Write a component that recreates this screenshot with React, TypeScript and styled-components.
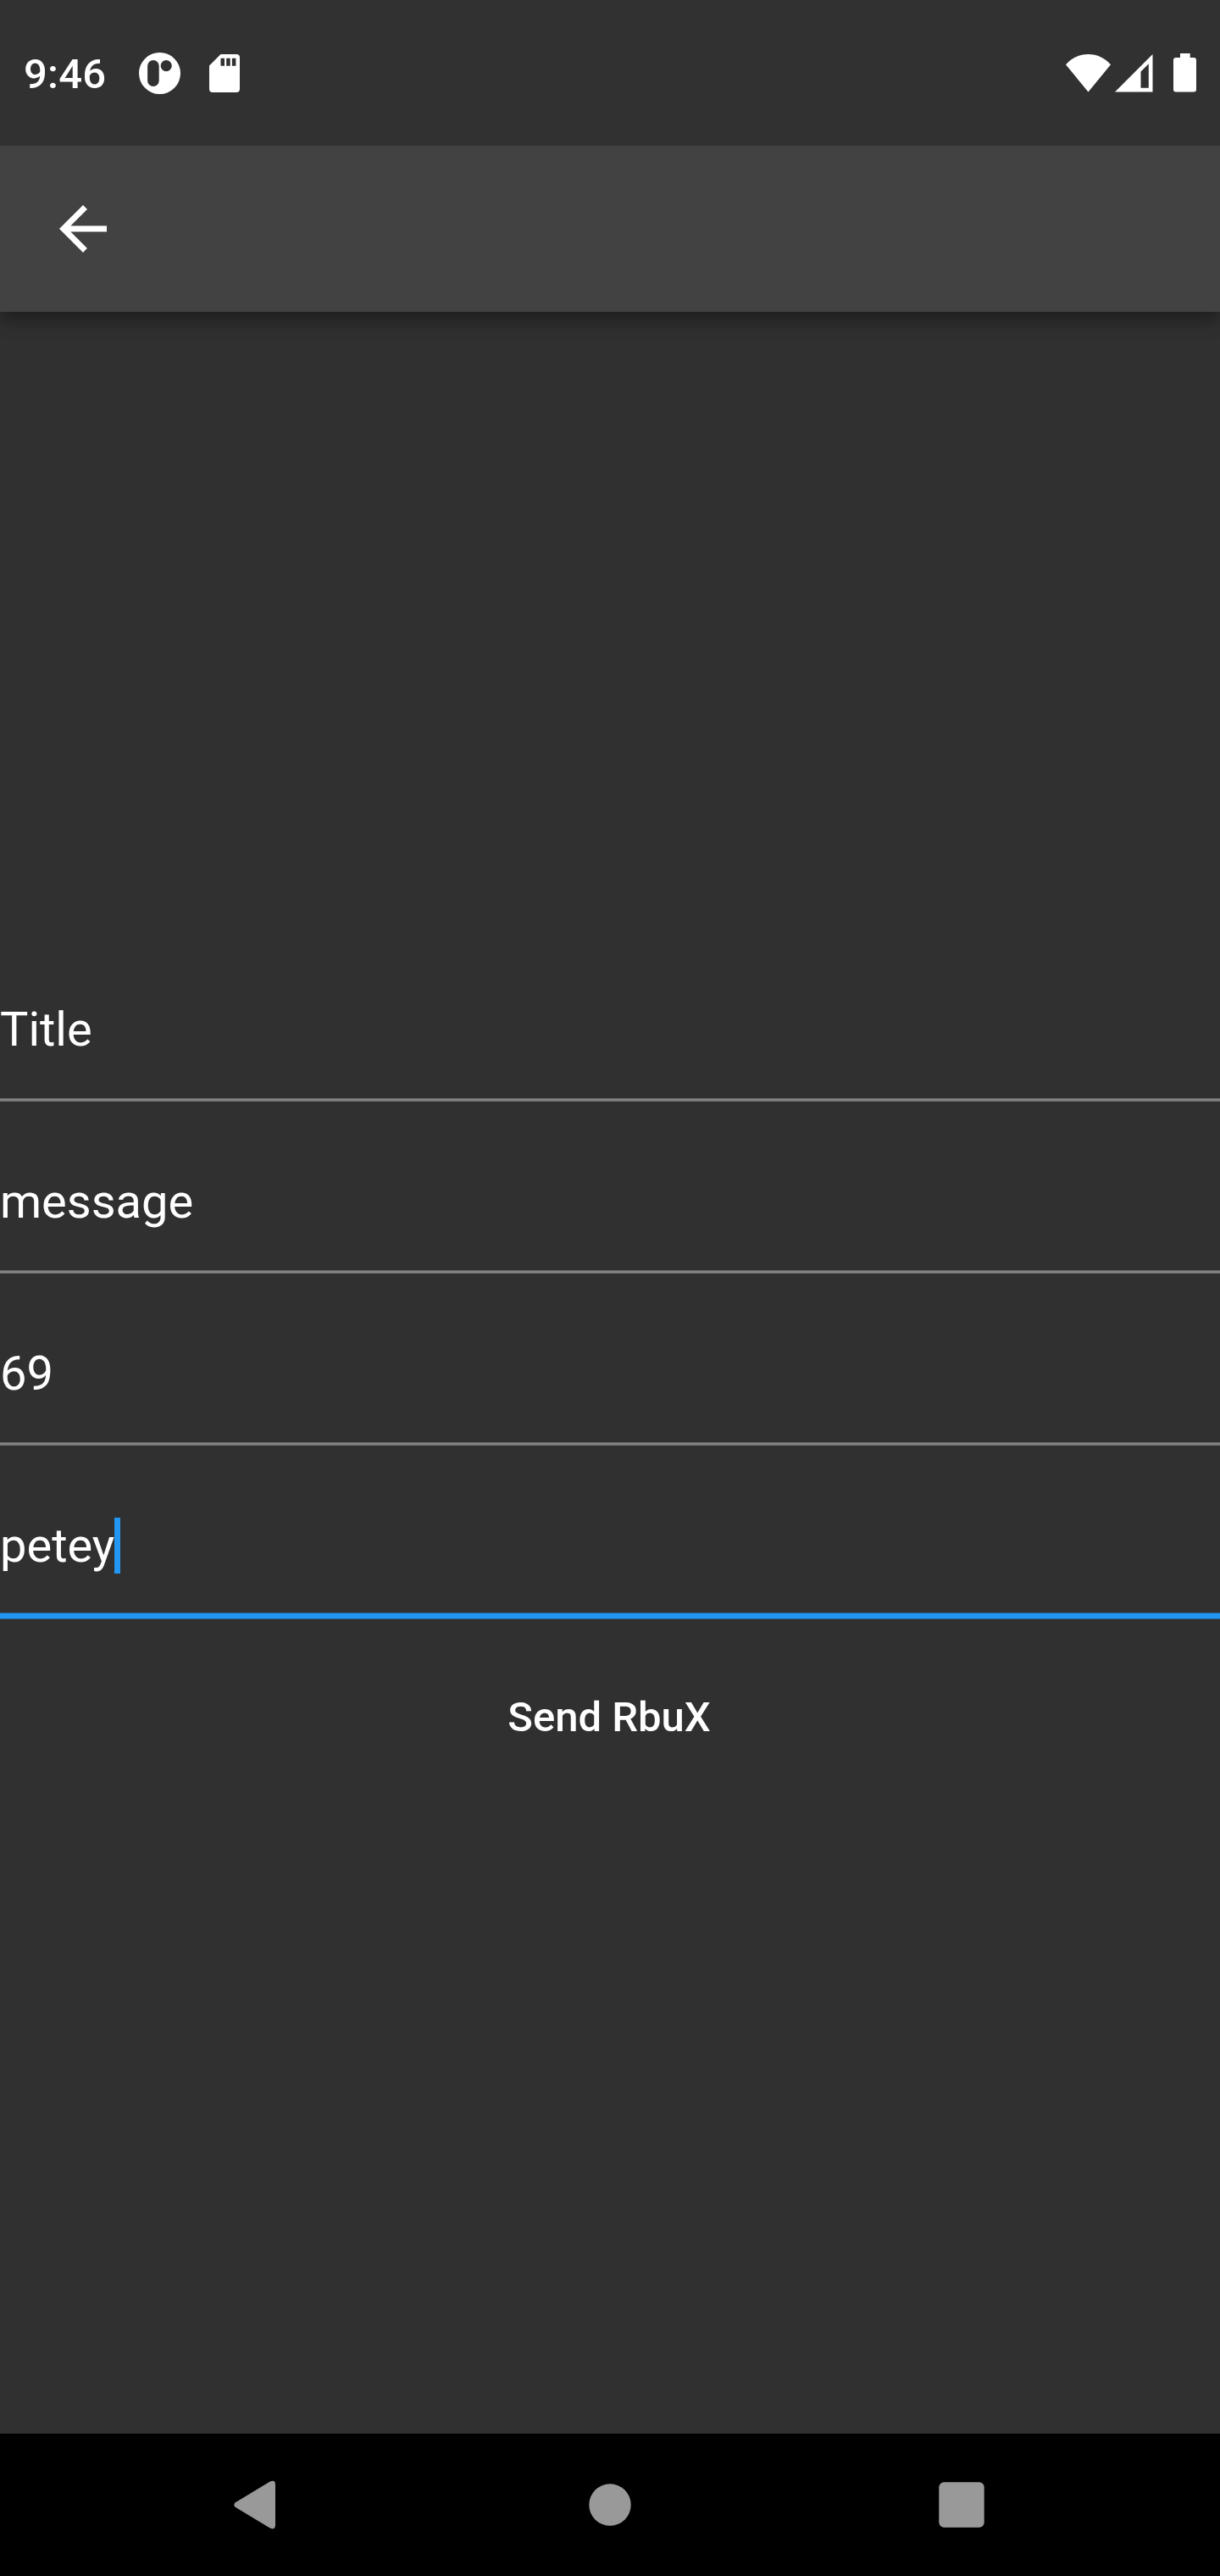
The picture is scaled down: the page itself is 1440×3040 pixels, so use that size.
import React from "react";
import styled, { createGlobalStyle } from "styled-components";

const GlobalStyle = createGlobalStyle`
  * { box-sizing: border-box; }
  body { margin: 0; background: #303030; }
`;

const Screen = styled.div`
  width: 1440px;
  height: 3040px;
  display: flex;
  flex-direction: column;
  overflow: hidden;
  background: #303030;
  color: #fff;
  font-family: Roboto, "Noto Sans", sans-serif;
`;

const StatusBar = styled.header`
  height: 172px;
  flex: none;
  display: flex;
  align-items: center;
  justify-content: space-between;
  padding: 0 28px;
  background: #313131;
`;

const StatusGroup = styled.div`
  display: flex;
  align-items: center;
`;

const Clock = styled.time`
  width: 98px;
  margin-right: 37.5px;
  padding-top: 4px;
  font-size: 49px;
  line-height: 58px;
  font-weight: 500;
  letter-spacing: 0.2px;
  white-space: nowrap;
`;

const Glyph = styled.svg<{ $gap?: number }>`
  display: block;
  flex: none;
  fill: #fff;
  margin-left: ${(p) => p.$gap ?? 0}px;
`;

const AppBar = styled.nav`
  height: 196px;
  flex: none;
  display: flex;
  align-items: center;
  padding-left: 56px;
  background: #424242;
  z-index: 1;
  box-shadow:
    0 7px 14px -3.5px rgba(0, 0, 0, 0.2),
    0 14px 17.5px 0 rgba(0, 0, 0, 0.14),
    0 3.5px 35px 0 rgba(0, 0, 0, 0.12);
  clip-path: inset(0 0 -60px 0);
`;

const BackButton = styled.button`
  padding: 0;
  border: 0;
  background: none;
`;

const Form = styled.main`
  flex: 1;
  display: flex;
  flex-direction: column;
  justify-content: center;
`;

const Field = styled.div`
  height: 203px;
  flex: none;
  display: flex;
  flex-direction: column;
  padding-top: 52px;
`;

const FieldBody = styled.div<{ $focused?: boolean }>`
  height: ${(p) => (p.$focused ? 112 : 114)}px;
  display: flex;
  align-items: flex-start;
`;

const Underline = styled.div<{ $focused?: boolean }>`
  height: ${(p) => (p.$focused ? 8 : 4)}px;
  background: ${(p) => (p.$focused ? "#2196f3" : "#838383")};
  border: solid ${(p) => (p.$focused ? "#296392" : "#6e6e6e")};
  border-width: 1px 0;
`;

const Value = styled.span`
  font-size: 56px;
  line-height: 66px;
  white-space: pre;
`;

const Caret = styled.i`
  width: 7px;
  height: 66px;
  background: #2196f3;
`;

const SendButton = styled.button`
  height: 168px;
  flex: none;
  align-self: center;
  padding: 2px 57px 0 55px;
  border: 0;
  background: none;
  color: #fff;
  font: 500 49px/58px Roboto, "Noto Sans", sans-serif;
`;

const NavBar = styled.footer`
  height: 168px;
  flex: none;
  display: flex;
  align-items: center;
  padding-left: 276px;
  background: #000;
`;

const NavGlyph = styled(Glyph)`
  fill: #999;
`;

const fields = [
  { value: "Title" },
  { value: "message" },
  { value: "69" },
  { value: "petey", focused: true },
];

export default function App() {
  return (
    <>
      <GlobalStyle />
      <Screen>
        <StatusBar>
          <StatusGroup>
            <Clock>9:46</Clock>
            <Glyph width="49" height="49" viewBox="0 0 49 49">
              <path
                fillRule="evenodd"
                d="M24.5 0a24.5 24.5 0 1 0 0 49a24.5 24.5 0 1 0 0-49zM16.9 9a6.8 6.8 0 0 1 6.8 6.8v17.5a6.8 6.8 0 0 1-13.6 0V15.8a6.8 6.8 0 0 1 6.8-6.8zM32.2 9a6.6 6.6 0 1 1 0 13.2a6.6 6.6 0 1 1 0-13.2z"
              />
            </Glyph>
            <Glyph $gap={34.5} width="36" height="45" viewBox="0 0 36 45">
              <path
                fillRule="evenodd"
                d="M13.5 0H32a4 4 0 0 1 4 4V41a4 4 0 0 1-4 4H4a4 4 0 0 1-4-4V13.5zM13.5 4.7v9h4.5v-9zM20.2 4.7v9h4.5v-9zM26.9 4.7v9h4.5v-9z"
              />
            </Glyph>
          </StatusGroup>
          <StatusGroup>
            <Glyph width="53" height="45" viewBox="0 0 53 45">
              <path d="M0 12.3C7 4.5 16 0 26.5 0S46 4.5 53 12.3L26.5 44.5z" />
            </Glyph>
            <Glyph $gap={4.5} width="45" height="45" viewBox="0 0 45 45">
              <path fillRule="evenodd" d="M44.5 0V44.5H0zM39.8 11.2L30.5 20.5V39.7H39.8z" />
            </Glyph>
            <Glyph $gap={24.5} width="27" height="46" viewBox="0 0 27 46">
              <path d="M8 0H19.7V5H24a3 3 0 0 1 3 3V42.5a3 3 0 0 1-3 3H3a3 3 0 0 1-3-3V8a3 3 0 0 1 3-3H8z" />
            </Glyph>
          </StatusGroup>
        </StatusBar>

        <AppBar>
          <BackButton aria-label="Back">
            <Glyph width="84" height="84" viewBox="0 0 24 24">
              <path d="M20 11H7.83l5.59-5.59L12 4l-8 8 8 8 1.41-1.41L7.83 13H20v-2z" />
            </Glyph>
          </BackButton>
        </AppBar>

        <Form>
          {fields.map((f) => (
            <Field key={f.value}>
              <FieldBody $focused={f.focused}>
                <Value>{f.value}</Value>
                {f.focused && <Caret />}
              </FieldBody>
              <Underline $focused={f.focused} />
            </Field>
          ))}
          <SendButton>Send RbuX</SendButton>
        </Form>

        <NavBar>
          <NavGlyph width="50" height="58" viewBox="0 0 50 58">
            <path d="M1.8 26.2L42.8 1.4Q48.9-.8 49 5V53Q48.9 58.8 42.8 56.6L1.8 31.8Q-1.2 29 1.8 26.2z" />
          </NavGlyph>
          <NavGlyph $gap={369} width="50" height="50" viewBox="0 0 50 50">
            <circle cx="25" cy="25" r="24.7" />
          </NavGlyph>
          <NavGlyph $gap={363} width="54" height="54" viewBox="0 0 54 54">
            <rect x=".3" y=".3" width="53.4" height="53.4" rx="6" />
          </NavGlyph>
        </NavBar>
      </Screen>
    </>
  );
}
